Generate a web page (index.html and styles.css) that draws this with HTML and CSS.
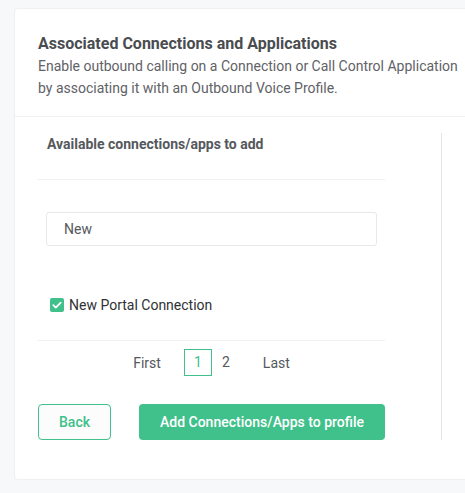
FILE: index.html
```html
<!DOCTYPE html>
<html>
<head>
<meta charset="utf-8">
<link rel="stylesheet" href="styles.css">
</head>
<body>
<div class="page">
  <div class="card">
    <div class="card-head">
      <h2 class="title">Associated Connections and Applications</h2>
      <p class="desc">Enable outbound calling on a Connection or Call Control Application by associating it with an Outbound Voice Profile.</p>
    </div>
    <div class="card-body">
      <div class="left">
        <div class="sub-title">Available connections/apps to add</div>
        <div class="search-wrap">
          <div class="search">New</div>
        </div>
        <div class="item">
          <span class="check"><svg width="14" height="14" viewBox="0 0 14 14"><path d="M3.3 7.2 L5.8 9.6 L10.7 4.6" fill="none" stroke="#fff" stroke-width="1.8" stroke-linecap="round" stroke-linejoin="round"/></svg></span>
          <span class="item-label">New Portal Connection</span>
        </div>
        <div class="pager">
          <span class="pg pg-text">First</span>
          <span class="pg pg-num active">1</span>
          <span class="pg pg-num">2</span>
          <span class="pg pg-text last">Last</span>
        </div>
        <div class="actions">
          <button class="btn btn-outline">Back</button>
          <button class="btn btn-primary">Add Connections/Apps to profile</button>
        </div>
      </div>
      <div class="right"></div>
    </div>
  </div>
</div>
</body>
</html>
```
FILE: styles.css
```css
html, body {
  margin: 0;
  padding: 0;
  background: #f7f8fa;
  overflow: hidden;
  font-family: Roboto, "Liberation Sans", sans-serif;
}
.page {
  padding: 8px 0 13px 14px;
}
.card {
  width: 520px;
  background: #fff;
  border: 1px solid #eef0f2;
  border-radius: 4px;
  box-sizing: border-box;
}
.card-head {
  padding: 24px 24px 17px 23px;
  border-bottom: 1px solid #eef0f2;
}
.title {
  margin: 0;
  font-size: 16px;
  font-weight: 700;
  line-height: 22px;
  color: #4a4c50;
}
.desc {
  margin: 0;
  width: 430px;
  font-size: 14px;
  line-height: 22px;
  color: #5f6266;
}
.card-body {
  display: flex;
  padding: 16px 0 39px 23px;
}
.left {
  width: 347px;
}
.right {
  margin-left: 56px;
  border-left: 1px solid #e3e5e8;
  flex: 1;
}
.sub-title {
  padding: 1px 0 0 9px;
  font-size: 14px;
  font-weight: 700;
  line-height: 20px;
  color: #55585c;
  height: 45px;
  border-bottom: 1px solid #eef0f2;
}
.search-wrap {
  padding: 32px 8px 0 8px;
}
.search {
  height: 34px;
  box-sizing: border-box;
  border: 1px solid #e6e8eb;
  border-radius: 3px;
  padding: 0 0 0 17px;
  font-size: 14px;
  line-height: 32px;
  color: #55585c;
}
.item {
  display: flex;
  align-items: center;
  padding: 52px 0 0 12px;
  height: 14px;
  box-sizing: content-box;
  margin-bottom: 28px;
}
.check {
  width: 14px;
  height: 14px;
  border-radius: 2px;
  background: #40c08a;
  display: inline-flex;
}
.item-label {
  margin-left: 5px;
  font-size: 14px;
  color: #2f3134;
  line-height: 14px;
}
.pager {
  border-top: 1px solid #eef0f2;
  display: flex;
  justify-content: center;
  align-items: center;
  padding-top: 8px;
  height: 27px;
  box-sizing: content-box;
  font-size: 14px;
  color: #55585c;
}
.pg-text {
  padding: 0 23px 0 0;
}
.pg-text.last {
  padding: 0 0 0 23px;
}
.pg-num {
  width: 28px;
  height: 27px;
  line-height: 27px;
  text-align: center;
  box-sizing: border-box;
}
.pg-num.active {
  border: 1px solid #40c08a;
  color: #40c08a;
  line-height: 25px;
}
.actions {
  display: flex;
  gap: 28px;
  padding-top: 28px;
}
.btn {
  height: 36px;
  border-radius: 4px;
  font-family: Roboto, "Liberation Sans", sans-serif;
  font-size: 14px;
  font-weight: 500;
  cursor: pointer;
  box-sizing: border-box;
}
.btn-outline {
  width: 73px;
  border: 1px solid #40c08a;
  background: #fcfcfc;
  color: #40c08a;
}
.btn-primary {
  width: 246px;
  border: none;
  background: #40c08a;
  color: #fff;
}
```
